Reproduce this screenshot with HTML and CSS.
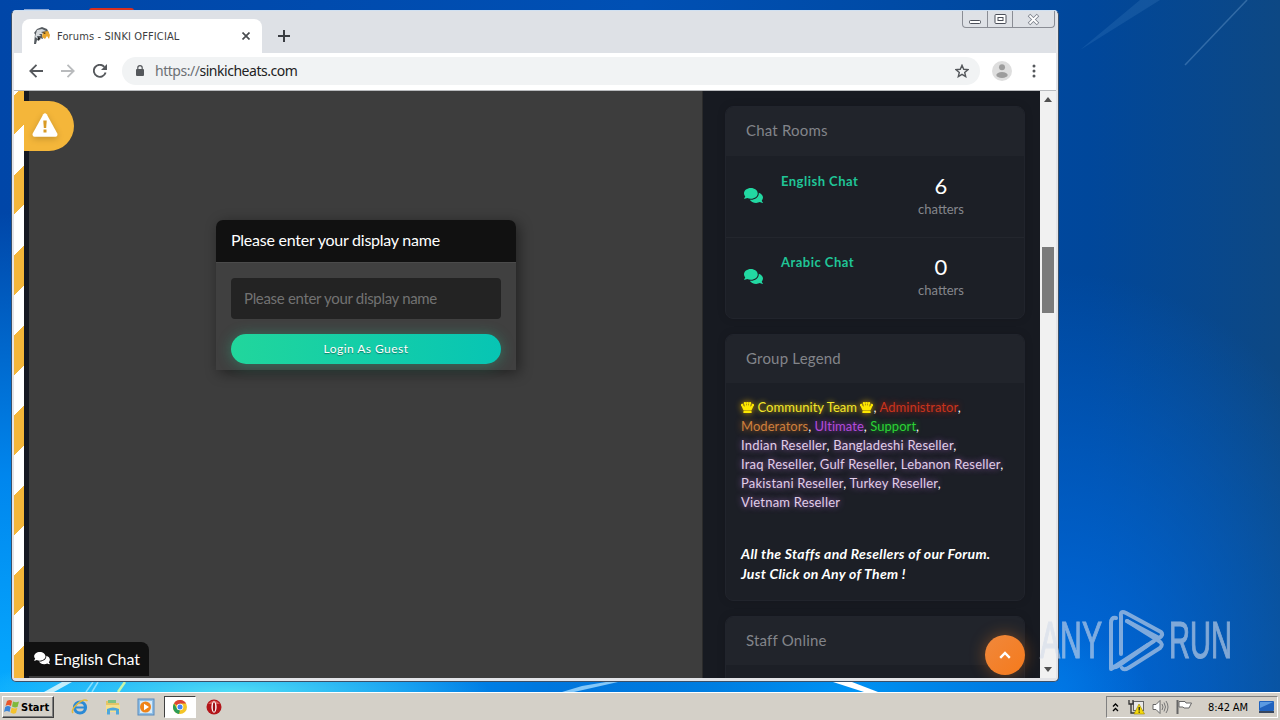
FILE: index.html
```html
<!DOCTYPE html>
<html lang="en">
<head>
    <meta charset="UTF-8">
    <meta name="viewport" content="width=device-width, initial-scale=1.0">
    <title>Forums - SINKI OFFICIAL</title>
    <link rel="stylesheet" href="styles.css">
</head>
<body>
    <svg class="defs">
        <symbol id="comments" viewBox="0 0 576 512">
            <path d="M416 192c0-88-93-160-208-160S0 104 0 192c0 34 14 66 38 92-13 30-36 54-36 55-2 2-3 6-1 9s4 5 7 5c37 0 67-12 88-25 33 15 71 24 112 24 115 0 208-72 208-160zm122 220c24-26 38-58 38-92 0-67-53-124-129-148 1 7 1 13 1 20 0 106-108 192-240 192-11 0-21-1-32-2 32 57 105 98 192 98 41 0 80-9 112-24 21 13 51 24 88 24 3 0 6-2 7-5 1-3 1-6-1-9 0 0-23-24-36-54z"/>
        </symbol>
        <symbol id="crown" viewBox="0 0 13 11">
            <path d="M2.300 11L2.600 8.800H10.400L10.700 11ZM2.500 8.200L.6 4.200A1.300 1.300 0 1 1 2.300 3.600L3.800 4.800L3.300 2.300A1.300 1.300 0 1 1 5 2L5.700 4.200L5.800 1.800A1.200 1.200 0 1 1 7.200 1.800L7.300 4.200L8 2A1.300 1.300 0 1 1 9.700 2.300L9.200 4.800L10.700 3.600A1.300 1.300 0 1 1 12.400 4.200L10.500 8.200Z"/>
        </symbol>
    </svg>
    <div class="desktop">
        <div class="wallpaper">
            <svg class="rays" width="1280" height="692">
                <path d="M1080 50L1160 0L1140 0Z" fill="#6aa5dc" opacity=".15"/>
                <path d="M1185 65L1247 0" stroke="#8fbce6" stroke-width="1.500" opacity=".3"/>
                <path d="M44 692L62 682L72 682L54 692Z" fill="#d5f4fb" opacity=".9"/>
                <path d="M86 692L93 682M92 692L98 682" stroke="#b0eeff" stroke-width="1.500" opacity=".7"/>
                <path d="M118 692L125 682" stroke="#c8f5a8" stroke-width="2.500"/>
                <path d="M562 692L582 686L606 682L618 682L574 692Z" fill="#a5dcff" opacity=".8"/>
                <path d="M833 682L852 682L878 692L864 692Z" fill="#fff"/>
            </svg>
            <div class="shortcut"></div>
            <div class="shortcut2"></div>

            <div class="window">
                <div class="tabstrip">
                    <div class="tab">
                        <svg width="18" height="18" viewBox="0 0 18 18">
                            <path d="M1 17L2 7L1 6L4 2L9 0L14 2L16 6L14 8L9 7L10 12L7 11L6 14L4 13L3 17Z" fill="#555b60"/>
                            <path d="M4 3L9 2L13 4L8 5L11 7L6 7L8 9L4 9L5 12L2 10Z" fill="#d5d9dc"/>
                            <path d="M10 5L15 4L17 8L16 12L14 9L12 12L9 10Z" fill="#e8a52b"/>
                            <path d="M10 5l3 1-2 1zM5 10l3 2-3 1z" fill="#222"/>
                        </svg>
                        <span class="title">Forums - SINKI OFFICIAL</span>
                        <svg width="8" height="8" viewBox="0 0 8 8"><path d="M.5 .5L7.5 7.5M7.5 .5L.5 7.5" stroke="#4a4d51" stroke-width="1.7"/></svg>
                    </div>
                    <svg class="plus" width="12" height="12" viewBox="0 0 12 12"><path d="M6 0V12M0 6H12" stroke="#3a3d42" stroke-width="2"/></svg>
                    <div class="controls">
                        <span><svg width="13" height="15"><rect x=".5" y="9.500" width="11" height="3" rx="1" fill="#fff" stroke="#4b4f59"/></svg></span>
                        <span><svg width="13" height="15"><rect x="1" y="3.500" width="11" height="9" rx="1" fill="#fff" stroke="#4b4f59"/><rect x="4" y="6.500" width="5" height="3" fill="#fff" stroke="#4b4f59"/></svg></span>
                        <span><svg width="13" height="15"><path d="M2 4L11 13M11 4L2 13" stroke="#7c808b" stroke-width="3.500"/><path d="M2.500 4.500L10.500 12.500M10.500 4.500L2.500 12.500" stroke="#fff" stroke-width="1.800"/></svg></span>
                    </div>
                </div>
                <div class="toolbar">
                    <svg width="14" height="14" viewBox="0 0 14 14"><path d="M14 7H1.500M7.500 .8L1.300 7L7.500 13.200" fill="none" stroke="#55585c" stroke-width="1.800"/></svg>
                    <svg width="14" height="14" viewBox="0 0 14 14"><path d="M0 7H12.500M6.500 .8L12.700 7L6.500 13.200" fill="none" stroke="#b9bbbd" stroke-width="1.800"/></svg>
                    <svg width="14" height="14" viewBox="0 0 14 14"><path d="M12.600 8.500A6 6 0 1 1 11.300 2.800" fill="none" stroke="#55585c" stroke-width="1.900"/><path d="M14 0V6H8Z" fill="#55585c"/></svg>
                    <div class="address">
                        <svg width="8" height="11" viewBox="0 0 8 11"><rect y="4" width="8" height="7" rx="1" fill="#55585c"/><path d="M1.800 4V2.800A2.200 2.200 0 0 1 6.200 2.800V4" fill="none" stroke="#55585c" stroke-width="1.200"/></svg>
                        <span class="url"><i>https://</i>sinkicheats.com</span>
                        <svg width="14" height="14" viewBox="0 0 14 14"><path d="M7 1.300L8.700 5.300L13 5.600L9.700 8.400L10.700 12.600L7 10.300L3.300 12.600L4.300 8.400L1 5.600L5.300 5.300Z" fill="none" stroke="#55585c" stroke-width="1.400"/></svg>
                    </div>
                    <svg width="20" height="20" viewBox="0 0 20 20"><circle cx="10" cy="10" r="10" fill="#dedede"/><circle cx="10" cy="6.200" r="3" fill="#9d9d9d"/><ellipse cx="10" cy="14" rx="5.700" ry="3" fill="#9d9d9d"/></svg>
                    <svg width="4" height="14" viewBox="0 0 4 14"><g fill="#55585c"><circle cx="2" cy="2" r="1.500"/><circle cx="2" cy="7" r="1.500"/><circle cx="2" cy="12" r="1.500"/></g></svg>
                </div>

                <div class="page">
                    <div class="stripes"></div>
                    <div class="chat">
                        <div class="login">
                            <div class="login-head">Please enter your display name</div>
                            <div class="login-body">
                                <div class="field">Please enter your display name</div>
                                <div class="btn">Login As Guest</div>
                            </div>
                        </div>
                        <div class="warning">
                            <svg width="26" height="24" viewBox="0 0 26 24"><path d="M11.300 1.200Q13 -.8 14.700 1.200L25.300 20.500Q26 23.500 23.500 23.800H2.500Q0 23.500 .7 20.500Z" fill="#fff"/><path d="M11.300 7.500H14.700L14.200 15H11.800Z" fill="#d99b25"/><rect x="11.500" y="16.500" width="3" height="3" fill="#d99b25"/></svg>
                        </div>
                        <div class="chat-tab"><svg width="16" height="14"><use href="#comments"/></svg><span>English Chat</span></div>
                    </div>
                    <div class="sidebar">
                        <div class="card rooms">
                            <h3>Chat Rooms</h3>
                            <div class="room">
                                <svg width="19" height="17"><use href="#comments"/></svg>
                                <b>English Chat</b>
                                <div class="count"><strong>6</strong><span>chatters</span></div>
                            </div>
                            <div class="room">
                                <svg width="19" height="17"><use href="#comments"/></svg>
                                <b>Arabic Chat</b>
                                <div class="count"><strong>0</strong><span>chatters</span></div>
                            </div>
                        </div>
                        <div class="card legend">
                            <h3>Group Legend</h3>
                            <div class="groups">
                                <div class="short"><span class="team"><svg width="13" height="11"><use href="#crown"/></svg> Community Team <svg width="13" height="11"><use href="#crown"/></svg></span>, <span class="admin">Administrator</span>,</div>
                                <div class="short"><span class="mod">Moderators</span>, <span class="ultimate">Ultimate</span>, <span class="support">Support</span>,</div>
                                <div><span class="reseller">Indian Reseller</span>, <span class="reseller">Bangladeshi Reseller</span>,</div>
                                <div><span class="reseller">Iraq Reseller</span>, <span class="reseller">Gulf Reseller</span>, <span class="reseller">Lebanon Reseller</span>,</div>
                                <div><span class="reseller">Pakistani Reseller</span>, <span class="reseller">Turkey Reseller</span>,</div>
                                <div><span class="reseller">Vietnam Reseller</span></div>
                            </div>
                            <p>All the Staffs and Resellers of our Forum.<br>Just Click on Any of Them !</p>
                        </div>
                        <div class="card staff">
                            <h3>Staff Online</h3>
                        </div>
                        <div class="top">
                            <svg width="12" height="8" viewBox="0 0 12 8"><path d="M1.200 6.800L6 2L10.800 6.800" fill="none" stroke="#fff" stroke-width="2.400"/></svg>
                        </div>
                    </div>
                    <div class="scrollbar">
                        <svg width="8" height="5"><path d="M0 5L4 0L8 5Z" fill="#505050"/></svg>
                        <div class="thumb"></div>
                        <svg width="8" height="5"><path d="M0 0L4 5L8 0Z" fill="#505050"/></svg>
                    </div>
                </div>
            </div>

            <svg class="watermark" width="210" height="66" viewBox="0 0 210 66">
                <g fill="#d4dcea" stroke="#d4dcea" stroke-width="1.200" font-family="Liberation Sans" font-size="51">
                    <text x="2" y="51" textLength="62" lengthAdjust="spacingAndGlyphs">ANY</text>
                    <text x="131" y="51" textLength="63" lengthAdjust="spacingAndGlyphs">RUN</text>
                </g>
                <g fill="none" stroke="#d4dcea" stroke-width="4" stroke-linejoin="round" stroke-linecap="round">
                    <path d="M78 11Q73 10 73 16V62L116 34"/>
                    <path d="M73 55V58Q75 62 80 59L110 38"/>
                    <path d="M83 47V9Q82 3 88 6L123 25Q126 28 121 31L89 14"/>
                    <path d="M84 61Q86 64 92 60L122 41Q126 37 121 34L89 14"/>
                </g>
            </svg>
        </div>

        <div class="taskbar">
            <div class="start">
                <svg width="16" height="16" viewBox="0 0 16 16">
                    <path d="M3 2Q6 0 8 2L7 7Q4 5 1.500 7Z" fill="#e8562a"/>
                    <path d="M9 2.500Q12 4 15 2.500L13.500 8Q11 9 8 7.500Z" fill="#7fb93c"/>
                    <path d="M1.200 8Q4 6 6.700 8L5.500 13Q3 11 0 13Z" fill="#3b85d8"/>
                    <path d="M7.700 8.500Q10 10 13.300 9L12 14Q9 15.500 6.500 13.500Z" fill="#f4c22d"/>
                </svg>
                <span>Start</span>
            </div>
            <div class="quick">
                <svg width="18" height="18" viewBox="0 0 18 18"><circle cx="9" cy="9.500" r="5.500" fill="none" stroke="#2b8ad6" stroke-width="3.200"/><path d="M5 9.500H14" stroke="#2b8ad6" stroke-width="2"/><path d="M2 15C-1 11 12 -1 16.500 3" fill="none" stroke="#e5b93a" stroke-width="1.600"/></svg>
                <svg width="18" height="18" viewBox="0 0 18 18"><path d="M2 3H7L8 5H15V14H2Z" fill="#e5c566"/><path d="M4 2H12V5H4Z" fill="#7fc283"/><path d="M2 7H16V14H2Z" fill="#f5e08e"/><path d="M3 16.500V11Q9 8 15 11V16.500H12V12.500H6V16.500Z" fill="#4ea7dc"/></svg>
                <svg width="18" height="18" viewBox="0 0 18 18"><rect x="1" y="1" width="16" height="16" fill="#8fc0e8" stroke="#5989bb"/><rect x="3" y="3" width="12" height="12" fill="#d9ebf8"/><circle cx="8.500" cy="9" r="5.500" fill="#ef8318"/><path d="M7 5.800L12 9L7 12.200Z" fill="#fff"/></svg>
                <div class="active">
                    <svg width="14" height="14" viewBox="0 0 14 14"><circle cx="7" cy="7" r="7" fill="#f4c527"/><path d="M7 7L1 3.400A7 7 0 0 1 13.100 3.500H7Z" fill="#db4437"/><path d="M1 3.400L4.500 9.500L7 10.500L6 14A7 7 0 0 1 1 3.400Z" fill="#2d9c57"/><circle cx="7" cy="7" r="3.300" fill="#fff"/><circle cx="7" cy="7" r="2.500" fill="#4285f4"/></svg>
                </div>
                <svg width="16" height="16" viewBox="0 0 16 16"><circle cx="8" cy="8" r="7.500" fill="#b3151a"/><path d="M2 5Q8 -2 14 5" fill="#db5a55"/><ellipse cx="8" cy="8" rx="2.600" ry="5.800" fill="#fff"/><ellipse cx="8" cy="8" rx="1.200" ry="4.700" fill="#9d1115"/></svg>
            </div>
            <div class="tray">
                <svg width="7" height="9" viewBox="0 0 7 9"><path d="M1 3.500L3.500 1L6 3.500M1 8L3.500 5.500L6 8" fill="none" stroke="#000" stroke-width="1.300"/></svg>
                <svg class="net" width="17" height="16" viewBox="0 0 17 16"><rect x="5.500" y="2.500" width="10" height="9" fill="#e9e9e9" stroke="#666"/><path d="M1 1V5H5V1M3 5V14H7" fill="none" stroke="#333" stroke-width="1.300"/><path d="M11 5L16.500 15H6Z" fill="#f5d90a" stroke="#9a8500" stroke-width=".6"/><path d="M11.200 8V11.500M11.200 12.500V13.800" stroke="#222" stroke-width="1.300"/></svg>
                <svg class="vol" width="17" height="16" viewBox="0 0 17 16"><path d="M1 5.500H4L8 1.500V14.500L4 10.500H1Z" fill="#fff" stroke="#666"/><path d="M10 5Q12 8 10 11M12 3.500Q15 8 12 12.500M14 2Q18 8 14 14" fill="none" stroke="#777"/></svg>
                <svg class="flag" width="17" height="16" viewBox="0 0 17 16"><path d="M1.500 1V15" stroke="#666" stroke-width="2"/><path d="M3 2.500H9L10 4H15.500L13 9H8L7 8H3Z" fill="#fff" stroke="#666"/></svg>
                <span class="clock">8:42 AM</span>
                <svg width="15" height="13" viewBox="0 0 15 13"><rect width="15" height="10" rx="1" fill="#1f62be"/><path d="M1 1H14L1 7Z" fill="#5a9ae2"/><rect y="10" width="15" height="2" fill="#38465d"/></svg>
            </div>
        </div>
    </div>
</body>
</html>
```
FILE: styles.css
```css
*{
    box-sizing: border-box;
}
body,h3,p{
    margin: 0;
    padding: 0;
}
body{
    width: 1280px;
    height: 720px;
    overflow: hidden;
}
svg{
    display: block;
    flex: none;
}
span,b{
    white-space: nowrap;
}
.defs{
    display: none;
}
.desktop{
    width: 1280px;
    height: 720px;
    display: flex;
    flex-direction: column;
    overflow: hidden;
}

/* wallpaper */
.wallpaper{
    position: relative;
    height: 692px;
    background:
        radial-gradient(ellipse 260px 40px at 230px 100%, #50dcf5, rgba(60,200,250,0)),
        radial-gradient(ellipse 900px 480px at 0 100%, #06aaff 0, rgba(0,150,255,.8) 45%, rgba(0,120,235,0) 100%),
        radial-gradient(ellipse 300px 100px at 850px 100%, #0094f5, rgba(0,130,240,0)),
        radial-gradient(ellipse 340px 420px at 1060px 100%, rgba(0,108,225,.95), rgba(0,85,190,0)),
        linear-gradient(90deg, #0046a8 0, #0050b4 50%, #00479b 85%, #0d4884 100%);
}
.rays{
    position: absolute;
    left: 0;
    top: 0;
}
.shortcut{
    position: absolute;
    left: 89px;
    top: 8px;
    width: 45px;
    height: 4px;
    border-radius: 3px 3px 0 0;
    background: #d9301f;
}
.shortcut2{
    position: absolute;
    left: 24px;
    top: 9px;
    width: 25px;
    height: 2px;
    background: #8aa7d6;
}

/* browser window */
.window{
    position: absolute;
    left: 11px;
    top: 10px;
    width: 1048px;
    height: 672px;
    padding: 0 2px 3px;
    border: 1px solid #3c5068;
    border-top-color: #cfe0f2;
    border-radius: 5px;
    background: #e3e4e8;
    overflow: hidden;
}
.tabstrip{
    display: flex;
    height: 42px;
    padding: 0 1px 0 8px;
    background: #dee1e6;
}
.tab{
    display: flex;
    align-items: center;
    width: 240px;
    height: 34px;
    margin-top: 8px;
    padding: 0 12px 0 11px;
    border-radius: 8px 8px 0 0;
    background: #fff;
}
.title{
    flex: 1;
    margin-left: 6px;
    font: 11px "DejaVu Sans Condensed", "DejaVu Sans", sans-serif;
    letter-spacing: .12px;
    color: #3c3e42;
}
.plus{
    margin: 19px 0 0 16px;
}
.controls{
    display: flex;
    width: 93px;
    height: 17px;
    margin-left: auto;
    border: 1px solid #8a8d95;
    border-top: 0;
    border-radius: 0 0 4px 4px;
}
.controls span{
    display: flex;
    justify-content: center;
    width: 25px;
    border-right: 1px solid #8a8d95;
}
.controls span:last-child{
    width: 41px;
    border: 0;
}
.toolbar{
    display: flex;
    align-items: center;
    gap: 18px;
    height: 38px;
    padding: 0 20px 2px 15px;
    border-bottom: 1px solid #b9bbbe;
    background: #fff;
}
.toolbar > svg:last-child{
    margin-left: 2px;
}
.address{
    display: flex;
    align-items: center;
    flex: 1;
    height: 28px;
    margin: 0 -6px 0 -3px;
    padding: 0 11px 0 14px;
    border-radius: 14px;
    background: #f1f3f4;
}
.url{
    flex: 1;
    margin-left: 11px;
    font: 14px "Noto Sans", sans-serif;
    letter-spacing: -.47px;
    color: #222;
}
.url i{
    font-style: normal;
    color: #6c7074;
}

/* page */
.page{
    display: flex;
    height: 587px;
    font-family: Lato, sans-serif;
    background: #171a21;
}
.stripes{
    width: 10px;
    background: repeating-linear-gradient(135deg, #fff 0, #fff 2.83px, #f4b63a 2.83px, #f4b63a 31.11px, #fff 31.11px, #fff 56.57px);
}
.chat{
    position: relative;
    width: 679px;
    padding: 129px 0 0 187px;
    border-left: 5px solid #151821;
    border-right: 1px solid #2b2b2b;
    background: #3d3d3d;
}
.login{
    width: 300px;
    height: 150px;
    border-radius: 7px 7px 0 0;
    background: #404040;
    box-shadow: 3px 3px 14px rgba(0,0,0,.45);
}
.login-head{
    height: 43px;
    padding-left: 15px;
    border-bottom: 1px solid #4b4b4b;
    border-radius: 7px 7px 0 0;
    line-height: 40px;
    font-size: 16px;
    letter-spacing: -.24px;
    color: #fff;
    background: #111;
}
.login-body{
    padding: 15px;
}
.field{
    height: 41px;
    padding-left: 13px;
    border-radius: 4px;
    line-height: 40px;
    font-size: 15px;
    letter-spacing: -.32px;
    color: #727272;
    background: #232323;
}
.btn{
    height: 30px;
    margin-top: 15px;
    border-radius: 15px;
    line-height: 30px;
    font-size: 12px;
    letter-spacing: .45px;
    text-align: center;
    color: #fff;
    text-shadow: 0 1px 1px rgba(0,0,0,.4);
    background: linear-gradient(90deg, #21d69c, #07c5b4);
    box-shadow: 0 1px 14px rgba(33,214,156,.35);
}
.warning{
    position: absolute;
    left: -5px;
    top: 10px;
    display: flex;
    align-items: center;
    width: 50px;
    height: 50px;
    padding: 0 0 2px 8px;
    border-radius: 0 25px 25px 0;
    background: #f4b63a;
}
.warning svg{
    filter: drop-shadow(0 2px 3px rgba(0,0,0,.2));
}
.chat-tab{
    position: absolute;
    left: -5px;
    bottom: 2px;
    display: flex;
    align-items: center;
    gap: 4px;
    width: 125px;
    height: 34px;
    padding: 0 0 2px 10px;
    border-radius: 0 8px 0 0;
    font-size: 16px;
    letter-spacing: -.1px;
    color: #fff;
    fill: #fff;
    background: #111;
}
.sidebar{
    position: relative;
    width: 337px;
    padding: 15px 15px 0 22px;
    overflow: hidden;
}
.card{
    width: 300px;
    margin-bottom: 15px;
    border: 1px solid #21242c;
    border-radius: 8px;
    background: #1c1f26;
    overflow: hidden;
    box-shadow: 0 0 8px rgba(0,0,0,.12);
}
.card h3{
    height: 48px;
    padding-left: 20px;
    line-height: 46px;
    font-size: 15px;
    font-weight: normal;
    letter-spacing: .2px;
    color: #83858a;
    background: #21242b;
}
.rooms{
    height: 213px;
}
.rooms h3{
    height: 49px;
}
.room{
    display: flex;
    height: 81px;
    padding: 15px 0 0 18px;
}
.room + .room{
    padding-top: 14px;
    border-top: 1px solid #23262d;
}
.room svg{
    margin: 16px 18px 0 0;
    fill: #22d8a2;
}
.room b{
    width: 137px;
    line-height: 20px;
    font-size: 13px;
    letter-spacing: .48px;
    color: #20c597;
}
.count{
    width: 46px;
    display: flex;
    flex-direction: column;
    align-items: center;
    font-size: 13px;
    color: #85878d;
}
.count strong{
    height: 30px;
    line-height: 29px;
    font-size: 22px;
    font-weight: normal;
    color: #fff;
}
.legend{
    height: 267px;
}
.groups{
    height: 156px;
    padding: 15px 0 0 15px;
    line-height: 19px;
    font-size: 13px;
    letter-spacing: .2px;
    white-space: nowrap;
    color: #fff;
}
.groups .short{
    letter-spacing: .05px;
}
.groups svg{
    display: inline-block;
    vertical-align: -1px;
    fill: #fde800;
    filter: drop-shadow(0 0 3px #e0a800);
}
.team{
    color: #f3e62a;
    text-shadow: 0 0 5px #d8b800;
}
.admin{
    color: #c9341d;
    text-shadow: 0 0 6px #c0230f;
}
.mod{
    color: #cd7f3d;
    text-shadow: 0 0 6px #b0621f;
}
.ultimate{
    color: #b34bdc;
    text-shadow: 0 0 6px #8e31b5;
}
.support{
    color: #2bd235;
    text-shadow: 0 0 6px #12a51d;
}
.reseller{
    color: #e0cde8;
    text-shadow: 0 0 6px #9c62b8;
}
.legend p{
    padding: 5px 0 0 15px;
    line-height: 20px;
    font-size: 14px;
    font-weight: bold;
    font-style: italic;
    letter-spacing: .3px;
    white-space: nowrap;
    color: #fff;
}
.staff{
    height: 120px;
}
.top{
    position: absolute;
    right: 15px;
    bottom: 3px;
    display: flex;
    align-items: center;
    justify-content: center;
    width: 40px;
    height: 40px;
    border-radius: 50%;
    background: linear-gradient(135deg, #f0883c, #f57a1c);
    box-shadow: 0 0 16px rgba(245,125,30,.4);
}
.scrollbar{
    display: flex;
    flex-direction: column;
    align-items: center;
    width: 16px;
    padding: 6px 0;
    background: #f1f1f1;
}
.thumb{
    width: 12px;
    height: 66px;
    margin: 145px 0 auto;
    background: #7b7b7b;
}
.watermark{
    position: absolute;
    left: 1038px;
    top: 607px;
    opacity: .6;
}

/* taskbar */
.taskbar{
    display: flex;
    align-items: center;
    height: 28px;
    padding: 1px 2px 0;
    border-top: 1px solid #fff;
    background: #d4d0c8;
}
.start{
    display: flex;
    align-items: center;
    gap: 1px;
    width: 52px;
    height: 22px;
    padding-left: 1px;
    border: 1px solid;
    border-color: #fff #404040 #404040 #fff;
    box-shadow: inset -1px -1px #808080;
    font: bold 11px "DejaVu Sans Condensed", "DejaVu Sans", sans-serif;
    color: #000;
}
.quick{
    display: flex;
    align-items: center;
    gap: 15px;
    margin-left: 17px;
}
.active{
    display: flex;
    align-items: center;
    justify-content: center;
    width: 32px;
    height: 22px;
    margin: 0 -5px 0 -6px;
    border: 1px solid;
    border-color: #404040 #fff #fff #404040;
    background: #fff;
}
.tray{
    display: flex;
    align-items: center;
    width: 172px;
    height: 22px;
    margin-left: auto;
    padding-left: 5px;
    border: 1px solid;
    border-color: #808080 #fff #fff #808080;
}
.net{
    margin-left: 9px;
}
.vol,.flag{
    margin-left: 7px;
}
.clock{
    width: 41px;
    margin: 0 10px 0 15px;
    font: 11px "DejaVu Sans Condensed", "DejaVu Sans", sans-serif;
    letter-spacing: -.1px;
    color: #000;
}
```
